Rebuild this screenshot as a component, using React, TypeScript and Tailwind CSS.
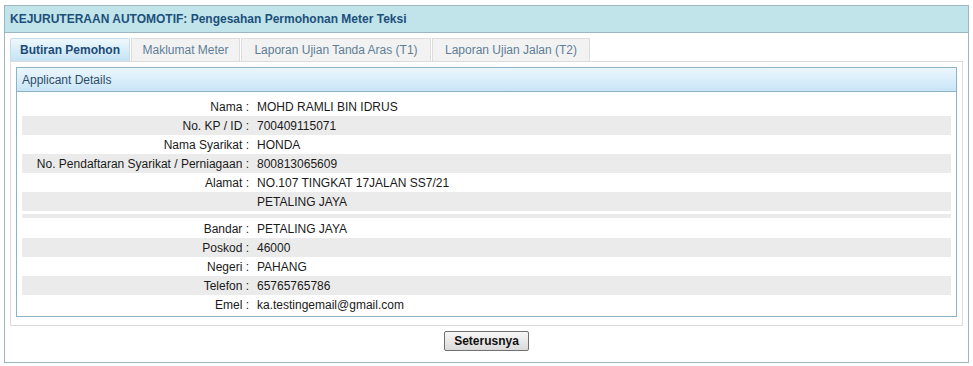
import React from "react";

const rows: [string, string][] = [
  ["Nama :", "MOHD RAMLI BIN IDRUS"],
  ["No. KP / ID :", "700409115071"],
  ["Nama Syarikat :", "HONDA"],
  ["No. Pendaftaran Syarikat / Perniagaan :", "800813065609"],
  ["Alamat :", "NO.107 TINGKAT 17JALAN SS7/21"],
  ["", "PETALING JAYA"],
];
const rows2: [string, string][] = [
  ["Bandar :", "PETALING JAYA"],
  ["Poskod :", "46000"],
  ["Negeri :", "PAHANG"],
  ["Telefon :", "65765765786"],
  ["Emel :", "ka.testingemail@gmail.com"],
];

function Row({ label, value, striped }: { label: string; value: string; striped: boolean }) {
  return (
    <div className={`flex h-[19px] items-center ${striped ? "bg-[#ebebeb]" : ""}`}>
      <div className="w-[227px] shrink-0 text-right">{label}</div>
      <div className="pl-[8px]">{value}</div>
    </div>
  );
}

export default function App() {
  return (
    <div className="pt-[5px] px-[4px] text-[12px] text-[#1a1a1a]" style={{ fontFamily: '"Liberation Sans", Arial, sans-serif' }}>
      <div className="w-[965px] h-[358px] border border-[#9db6c3] bg-white">
        <div className="h-[27px] border-b border-[#9db6c3] bg-[#c0e4ea] pl-[5px] flex items-center font-bold text-[#1d4f7b]">
          KEJURUTERAAN AUTOMOTIF: Pengesahan Permohonan Meter Teksi
        </div>
        <div className="px-[5px] pt-[5px]">
          <div className="flex h-[23px] items-stretch">
            <div className="w-[120px] mr-[1px] flex items-center justify-center border border-b-0 border-[#c6dceb] bg-gradient-to-b from-[#eef8fd] to-[#c4e3f4] font-bold text-[#1b4b77] rounded-t-[2px]">
              Butiran Pemohon
            </div>
            <div className="w-[109px] mr-[1px] flex items-center justify-center border border-b-0 border-[#dcdcdc] bg-[#f2f2f2] text-[#5e7e96]">
              Maklumat Meter
            </div>
            <div className="w-[190px] mr-[1px] flex items-center justify-center border border-b-0 border-[#dcdcdc] bg-[#f2f2f2] text-[#5e7e96]">
              Laporan Ujian Tanda Aras (T1)
            </div>
            <div className="w-[158px] flex items-center justify-center border border-b-0 border-[#dcdcdc] bg-[#f2f2f2] text-[#5e7e96]">
              Laporan Ujian Jalan (T2)
            </div>
          </div>
          <div className="border border-[#dcdcdc] px-[5px] pt-[5px] pb-[8px]">
            <div className="border border-[#8fb2c8]">
              <div className="h-[24px] border-b border-[#8fb2c8] bg-gradient-to-b from-[#ecf7fe] to-[#c8e5f7] pl-[5px] flex items-center text-[#2f4d66]">
                Applicant Details
              </div>
              <div className="px-[5px] pt-[5px] pb-[2px]">
                {rows.map((r, i) => (
                  <Row key={i} label={r[0]} value={r[1]} striped={i % 2 === 1} />
                ))}
                <div className="h-[8px] pt-[3px]">
                  <div className="h-[4px] bg-[#ebebeb]" />
                </div>
                {rows2.map((r, i) => (
                  <Row key={i} label={r[0]} value={r[1]} striped={i % 2 === 1} />
                ))}
              </div>
            </div>
          </div>
          <div className="flex justify-center pt-[5px]">
            <button className="w-[85px] h-[20px] border border-[#707070] rounded-[2px] bg-gradient-to-b from-[#f7f7f7] to-[#dadada] font-bold text-[#111] text-[12px] leading-none">
              Seterusnya
            </button>
          </div>
        </div>
      </div>
    </div>
  );
}
